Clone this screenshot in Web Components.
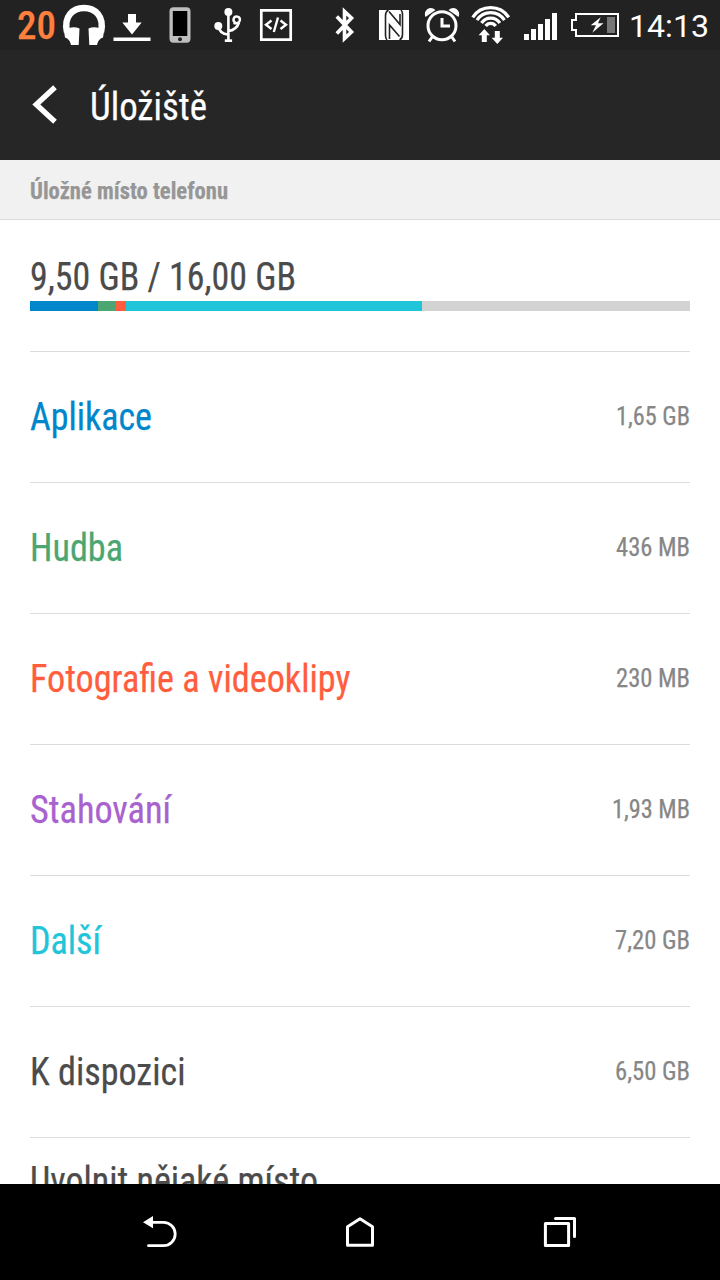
<!DOCTYPE html>
<html lang="cs">
<head>
<meta charset="utf-8">
<title>Úložiště</title>
<style>
  body {
    margin: 0;
    background: #fff;
    font-family: "Roboto Condensed", Roboto, sans-serif;
  }
</style>
</head>
<body>
<storage-screen></storage-screen>

<script>
const ICONS = {
  headphones: [48, 50, `
    <path d="M7 32C3.500 16 13 8 24 8s20.500 8 17 24" fill="none" stroke="#fff" stroke-width="6.500"/>
    <path d="M11 27.500q4-1 8.500 1l-.8 16.500h-7.700q-1-6-6-7.500L3.800 30zM37 27.500q-4-1-8.500 1l.8 16.500h7.700q1-6 6-7.500L44.200 30z"/>`],
  download: [48, 50, `<path d="M20 14h8v8.500h5.700L24 34.500 14.300 22.500H20zM5.500 37.500h37V41h-37z"/>`],
  phone: [48, 50, `
    <rect x="13.500" y="7.300" width="21" height="35.400" rx="4" fill="#bdbdbd"/>
    <path d="M16.800 11h14.500v25H16.800z" fill="#000"/>
    <circle cx="24" cy="39.200" r="2" fill="#222"/>`],
  usb: [48, 50, `
    <path d="M24.400 12v28M14.500 26q1 8 9.500 8.500M35 22.500q-2.500 7.500-10.500 8.500" fill="none" stroke="#fff" stroke-width="2.600"/>
    <path d="M29.500 22.800c3 1.200 6.400-.3 6.400-2.800a3.200 3.200 0 1 0-4.500 2.600" fill="none" stroke="#fff" stroke-width="2.400"/>
    <circle cx="24.400" cy="12" r="4"/><circle cx="14.300" cy="26" r="4"/>
    <path d="M20.800 39.300h7.300v2.700h-7.300z"/>`],
  code: [48, 50, `
    <path d="M9.300 10.300h29.400v29.400H9.300z" fill="none" stroke="#fff" stroke-width="2.700"/>
    <path d="M19.500 20.500L14 24.800l5.500 4.200M28.500 20.500l5.500 4.300-5.500 4.200M26 17.500L21.800 32" fill="none" stroke="#fff" stroke-width="2.400"/>`],
  bluetooth: [48, 50, `<path d="M16.800 16.500L31.500 32 24.500 38.500V11.500l7 6.500L16.800 33.500" fill="none" stroke="#fff" stroke-width="3.600"/>`],
  nfc: [48, 50, `
    <path d="M11 10h30v30H11z"/>
    <path d="M20.500 10q-3 1.500-3 5.500v20q0 3 1.500 4.500M21 11.500l11 13V14M31.500 40q3-1.500 3-5.500v-20q0-3-1.500-4.500M31.500 36.500l-10-11.500v14" fill="none" stroke="#222" stroke-width="1.600"/>`],
  alarm: [50, 50, `
    <circle cx="26" cy="25.700" r="14" fill="none" stroke="#fff" stroke-width="3"/>
    <path d="M26 18v8h8M16.500 36.500L13 41.500M35.500 36.500l3.500 5" fill="none" stroke="#fff" stroke-width="3"/>
    <path d="M9.500 17q-2-5 2-8 4-2.500 8 1zM42.500 17q2-5-2-8-4-2.500-8 1z"/>`],
  wifi: [50, 50, `
    <path d="M6.700 17.300a21.500 21.500 0 0 1 36 0M11 20.100a16.300 16.300 0 0 1 27.400 0M15.500 23a11 11 0 0 1 18.400 0M19.700 26a6 6 0 0 1 10 0" fill="none" stroke="#fff" stroke-width="3.200"/>
    <path d="M18.300 29l5.700 6.200h-3.200V42h-5v-6.800h-3.200zM31.300 44l-5.700-6.200h3.200V31h5v6.800h3.200z"/>`],
  signal: [50, 50, `<path d="M8 34h5v6H8zM15 29h5v11h-5zM22 24h5v16h-5zM29 19h5v21h-5zM36 13h5v27h-5z"/>`],
  battery: [58, 50, `
    <path d="M10 14h42v22H10v-6H6V20h4z" fill="none" stroke="#fff" stroke-width="2"/>
    <path d="M41 17h8v16h-8z" fill="#777"/>
    <path d="M34.700 17.300l-10 8h5.300l-3.700 7.400 11.200-9.400H32z"/>`],
  chevron: [30, 44, `<path d="M25 5.200L6.300 22.500 25 39.800" fill="none" stroke="#fff" stroke-width="5.400"/>`],
  back: [48, 48, `
    <path d="M16 14.300h11.500a11.700 11.700 0 0 1 0 23.400H12.500" fill="none" stroke="#fff" stroke-width="2.800" stroke-linecap="round"/>
    <path d="M7 14.200L17 8v12.200z"/>`],
  home: [48, 48, `<path d="M24 10.700l12.500 8v18.600h-25V18.700z" fill="none" stroke="#fff" stroke-width="3" stroke-linejoin="round"/>`],
  recents: [48, 48, `<path d="M9.400 15.400h23.200v22.200H9.400zM19.500 10.500h19v18" fill="none" stroke="#fff" stroke-width="3" stroke-linecap="round" stroke-linejoin="round"/>`]
};

class AppIcon extends HTMLElement {
  constructor() {
    super();
    this.attachShadow({ mode: 'open' });
  }

  connectedCallback() {
    const [w, h, body] = ICONS[this.getAttribute('name')];
    this.shadowRoot.innerHTML = `
      <style>
        :host { display: block; flex: none; }
        svg { display: block; }
      </style>
      <svg width="${w}" height="${h}" viewBox="0 0 ${w} ${h}" fill="#fff">${body}</svg>
    `;
  }
}

// One line of text, narrowed to the given width
class FitText extends HTMLElement {
  constructor() {
    super();
    this.attachShadow({ mode: 'open' });
    this.shadowRoot.innerHTML = `
      <style>
        :host {
          display: block;
          flex: none;
          white-space: nowrap;
          font-stretch: condensed;
          -webkit-text-stroke: .25px currentColor;
        }

        span {
          display: inline-block;
          transform-origin: 0 50%;
        }
      </style>
      <span><slot></slot></span>
    `;
  }

  connectedCallback() {
    const span = this.shadowRoot.querySelector('span');
    const width = Number(this.getAttribute('width'));
    const natural = span.getBoundingClientRect().width;
    this.style.width = width + 'px';
    span.style.transform = `scaleX(${width / natural})`;
  }
}

class StatusBar extends HTMLElement {
  constructor() {
    super();
    this.attachShadow({ mode: 'open' });
    this.shadowRoot.innerHTML = `
      <style>
        :host {
          display: flex;
          height: 50px;
          box-sizing: border-box;
          padding: 0 11px 0 17px;
          background: #222;
          color: #fff;
          line-height: 50px;
        }

        .count {
          margin-right: 4px;
          color: #ff7f3f;
          font-size: 39px;
          font-weight: 500;
          line-height: 52px;
        }

        .right {
          display: flex;
          margin-left: auto;
        }

        .clock {
          margin-left: 5px;
          font-family: Roboto, sans-serif;
          font-stretch: normal;
          font-size: 32px;
          line-height: 52px;
          -webkit-text-stroke: 0;
        }
      </style>
      <fit-text class="count" width="39">20</fit-text>
      <app-icon name="headphones"></app-icon>
      <app-icon name="download"></app-icon>
      <app-icon name="phone"></app-icon>
      <app-icon name="usb"></app-icon>
      <app-icon name="code"></app-icon>
      <div class="right">
        <app-icon name="bluetooth"></app-icon>
        <app-icon name="nfc"></app-icon>
        <app-icon name="alarm"></app-icon>
        <app-icon name="wifi"></app-icon>
        <app-icon name="signal"></app-icon>
        <app-icon name="battery"></app-icon>
        <fit-text class="clock" width="80">14:13</fit-text>
      </div>
    `;
  }
}

class ActionBar extends HTMLElement {
  constructor() {
    super();
    this.attachShadow({ mode: 'open' });
    this.shadowRoot.innerHTML = `
      <style>
        :host {
          display: flex;
          align-items: center;
          gap: 30px;
          height: 110px;
          box-sizing: border-box;
          padding: 4px 30px 0;
          background: #262626;
          color: #fff;
          font-size: 39px;
        }

        app-icon {
          margin-top: -6px;
        }
      </style>
      <app-icon name="chevron"></app-icon>
      <slot></slot>
    `;
  }
}

class SectionHeader extends HTMLElement {
  constructor() {
    super();
    this.attachShadow({ mode: 'open' });
    this.shadowRoot.innerHTML = `
      <style>
        :host {
          display: block;
          height: 60px;
          box-sizing: border-box;
          padding: 3px 30px 0;
          border-bottom: 1px solid #dcdcdc;
          background: #f1f1f1;
          color: #969696;
          font-size: 24px;
          font-weight: 700;
          line-height: 57px;
        }
      </style>
      <slot></slot>
    `;
  }
}

class UsageSummary extends HTMLElement {
  constructor() {
    super();
    this.attachShadow({ mode: 'open' });
    this.shadowRoot.innerHTML = `
      <style>
        :host {
          display: block;
          height: 131px;
          box-sizing: border-box;
          padding: 33px 30px 0;
          color: #4b4b4b;
          font-size: 39px;
          line-height: 48px;
        }

        .bar {
          display: grid;
          grid-template-columns: 68px 18px 10px 296px 1fr;
          height: 10px;
        }
      </style>
      <slot></slot>
      <div class="bar">
        <i style="background: #0086cb"></i>
        <i style="background: #4ba671"></i>
        <i style="background: #ff5d3d"></i>
        <i style="background: #20c5da"></i>
        <i style="background: #d3d3d3"></i>
      </div>
    `;
  }
}

class StorageRow extends HTMLElement {
  constructor() {
    super();
    this.attachShadow({ mode: 'open' });
    this.shadowRoot.innerHTML = `
      <style>
        :host {
          display: flex;
          align-items: center;
          justify-content: space-between;
          flex: none;
          height: 131px;
          box-sizing: border-box;
          margin: 0 30px;
          border-top: 1px solid #dcdcdc;
          color: #4b4b4b;
          font-size: 39px;
          line-height: 46px;
        }

        .value {
          margin-top: -2px;
          color: #868686;
          font-size: 26px;
        }
      </style>
      <slot></slot>
      <div class="value"><slot name="value"></slot></div>
    `;
  }
}

class NavBar extends HTMLElement {
  constructor() {
    super();
    this.attachShadow({ mode: 'open' });
    this.shadowRoot.innerHTML = `
      <style>
        :host {
          display: grid;
          grid-template-columns: repeat(3, 200px);
          place-content: center;
          place-items: center;
          height: 96px;
          background: #000;
        }
      </style>
      <app-icon name="back"></app-icon>
      <app-icon name="home"></app-icon>
      <app-icon name="recents"></app-icon>
    `;
  }
}

class StorageScreen extends HTMLElement {
  constructor() {
    super();
    this.attachShadow({ mode: 'open' });
    this.shadowRoot.innerHTML = `
      <style>
        :host {
          display: grid;
          grid-template-rows: 50px 110px 1fr 96px;
          width: 720px;
          height: 1280px;
          overflow: hidden;
        }

        main {
          min-height: 0;
          overflow: hidden;
        }

        /* scrolled partly under the navigation bar */
        .last {
          height: 87px;
        }
      </style>
      <status-bar></status-bar>
      <action-bar><fit-text width="117">Úložiště</fit-text></action-bar>
      <main>
        <section-header><fit-text width="198">Úložné místo telefonu</fit-text></section-header>
        <usage-summary><fit-text width="266">9,50 GB / 16,00 GB</fit-text></usage-summary>
        <storage-row style="color: #0086cb">
          <fit-text width="122">Aplikace</fit-text><fit-text slot="value" width="74">1,65 GB</fit-text>
        </storage-row>
        <storage-row style="color: #4ba671">
          <fit-text width="93">Hudba</fit-text><fit-text slot="value" width="74">436 MB</fit-text>
        </storage-row>
        <storage-row style="color: #ff5d3d">
          <fit-text width="320.500">Fotografie a videoklipy</fit-text><fit-text slot="value" width="74">230 MB</fit-text>
        </storage-row>
        <storage-row style="color: #a862cf">
          <fit-text width="141">Stahování</fit-text><fit-text slot="value" width="78">1,93 MB</fit-text>
        </storage-row>
        <storage-row style="color: #20c5da">
          <fit-text width="71">Další</fit-text><fit-text slot="value" width="75">7,20 GB</fit-text>
        </storage-row>
        <storage-row>
          <fit-text width="155.500">K dispozici</fit-text><fit-text slot="value" width="75">6,50 GB</fit-text>
        </storage-row>
        <storage-row class="last">
          <fit-text width="288">Uvolnit nějaké místo</fit-text>
        </storage-row>
      </main>
      <nav-bar></nav-bar>
    `;
  }
}

customElements.define('app-icon', AppIcon);
customElements.define('fit-text', FitText);
customElements.define('status-bar', StatusBar);
customElements.define('action-bar', ActionBar);
customElements.define('section-header', SectionHeader);
customElements.define('usage-summary', UsageSummary);
customElements.define('storage-row', StorageRow);
customElements.define('nav-bar', NavBar);
customElements.define('storage-screen', StorageScreen);
</script>
</body>
</html>
